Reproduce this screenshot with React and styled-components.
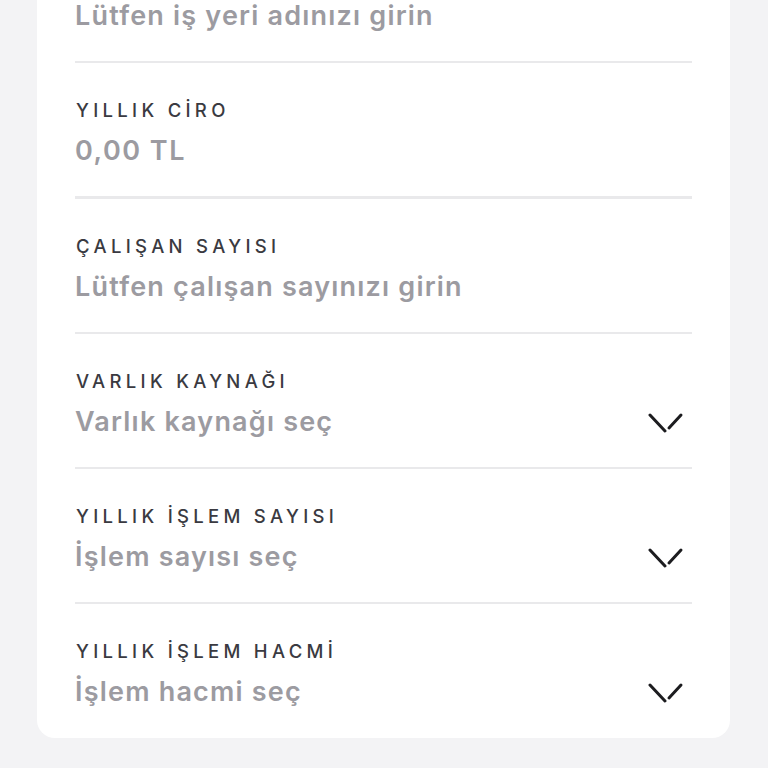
import React from 'react';
import styled, { createGlobalStyle } from 'styled-components';

const GlobalStyle = createGlobalStyle`
  html, body {
    margin: 0;
    padding: 0;
    background: #f3f3f5;
    font-family: "Inter", "Noto Sans", sans-serif;
    overflow: hidden;
  }
`

const Page = styled.div`
  width: 768px;
  height: 768px;
  overflow: hidden;
`

const Card = styled.div`
  margin-left: 37px;
  width: 693px;
  box-sizing: border-box;
  padding: 0 38px;
  background: #fff;
  border-radius: 0 0 18px 18px;
`

const Row = styled.div`
  display: flex;
  align-items: center;
  padding: ${p => (p.first ? '0 0 29px' : p.last ? '35px 0 30px' : '35px 0 29px')};
  border-bottom: ${p => (p.last ? 'none' : `${p.thick ? 3 : 2}px solid #e9e9eb`)};
`

const Texts = styled.div`
  flex: 1;
  display: flex;
  flex-direction: column;
  gap: 13px;
`

const Label = styled.div`
  font-size: 18.5px;
  line-height: 24px;
  font-weight: 500;
  letter-spacing: 4.3px;
  color: #3a3a41;
  padding-left: 1px;
`

const Value = styled.div`
  font-size: 27px;
  line-height: 32px;
  font-weight: 600;
  color: #9c9ba1;
  letter-spacing: ${p => (p.wide ? '1.5px' : '1.2px')};
`

const Chevron = styled.svg`
  width: 36px;
  height: 22px;
  margin: 38px 8px 0 0;
  flex-shrink: 0;
`

const fields = [
  { value: 'Lütfen iş yeri adınızı girin' },
  { label: 'YILLIK CİRO', value: '0,00 TL', thick: true, wide: true },
  { label: 'ÇALIŞAN SAYISI', value: 'Lütfen çalışan sayınızı girin' },
  { label: 'VARLIK KAYNAĞI', value: 'Varlık kaynağı seç', select: true },
  { label: 'YILLIK İŞLEM SAYISI', value: 'İşlem sayısı seç', select: true },
  { label: 'YILLIK İŞLEM HACMİ', value: 'İşlem hacmi seç', select: true },
];

function ChevronIcon() {
  return (
    <Chevron viewBox="0 0 36 22">
      <path d="M2 3 L17 19" stroke="#1c1c1f" strokeWidth="3" strokeLinecap="round" fill="none" />
      <path d="M21 16 L33 3" stroke="#1c1c1f" strokeWidth="3" strokeLinecap="round" fill="none" />
    </Chevron>
  );
}

export default function App() {
  return (
    <Page>
      <GlobalStyle />
      <Card>
        {fields.map((f, idx) => (
          <Row key={idx} first={idx === 0} thick={f.thick} last={idx === fields.length - 1}>
            <Texts>
              {f.label ? <Label>{f.label}</Label> : null}
              <Value wide={f.wide}>{f.value}</Value>
            </Texts>
            {f.select ? <ChevronIcon /> : null}
          </Row>
        ))}
      </Card>
    </Page>
  );
}
